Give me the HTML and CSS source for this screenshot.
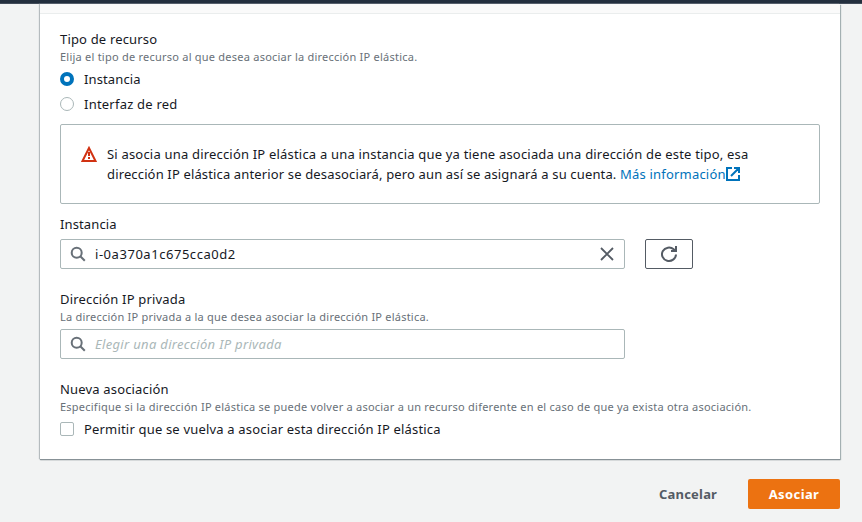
FILE: index.html
```html
<!DOCTYPE html>
<html lang="es">
<head>
<meta charset="utf-8">
<title>Asociar la dirección IP elástica</title>
<link rel="stylesheet" href="styles.css">
</head>
<body>
<div class="topbar"></div>
<main class="page">
  <section class="panel">
    <div class="panel-header"></div>
    <div class="panel-body">
      <div class="label l-type">Tipo de recurso</div>
      <div class="hint h-type">Elija el tipo de recurso al que desea asociar la dirección IP elástica.</div>
      <div class="choice first"><span class="radio selected"></span><span class="c-inst">Instancia</span></div>
      <div class="choice"><span class="radio"></span><span class="c-net">Interfaz de red</span></div>
      <div class="alert">
        <svg class="warn" viewBox="0 0 16 16"><path d="M8 2 1.5 15h13z" fill="none" stroke="#d13212" stroke-width="2"/><path d="M8 6v4M8 11v2" stroke="#d13212" stroke-width="2"/></svg>
        <p><span class="a-one">Si asocia una dirección IP elástica a una instancia que ya tiene asociada una dirección de este tipo, esa</span><br><span class="a-two">dirección IP elástica anterior se desasociará, pero aun así se asignará a su cuenta. <a>Más información</a></span><svg class="external" viewBox="0 0 14 14"><path d="M6 1H1v12h12V8M8 1h5v5M13 1 5 9" fill="none" stroke="#0073bb" stroke-width="2"/></svg></p>
      </div>
      <div class="label l-inst">Instancia</div>
      <div class="row">
        <div class="field">
          <svg class="search" viewBox="0 0 16 16"><circle cx="6.7" cy="6.7" r="5" /><path d="m10.3 10.3 4.5 4.5"/></svg>
          <span class="value">i-0a370a1c675cca0d2</span>
          <svg class="clear" viewBox="0 0 14 14"><path d="m1 1 12 12M13 1 1 13"/></svg>
        </div>
        <div class="refresh"><svg viewBox="0 0 16 16"><path d="M15 8.500a7 6.700 0 1 1-2.300-5.200L14.500 5M15 0v5h-5" fill="none" stroke="#545b64" stroke-width="2"/></svg></div>
      </div>
      <div class="label l-ip">Dirección IP privada</div>
      <div class="hint h-ip">La dirección IP privada a la que desea asociar la dirección IP elástica.</div>
      <div class="field">
        <svg class="search" viewBox="0 0 16 16"><circle cx="6.7" cy="6.7" r="5" /><path d="m10.3 10.3 4.5 4.5"/></svg>
        <span class="placeholder">Elegir una dirección IP privada</span>
      </div>
      <div class="label l-new">Nueva asociación</div>
      <div class="hint h-new">Especifique si la dirección IP elástica se puede volver a asociar a un recurso diferente en el caso de que ya exista otra asociación.</div>
      <div class="choice last"><span class="checkbox"></span><span class="c-allow">Permitir que se vuelva a asociar esta dirección IP elástica</span></div>
    </div>
  </section>
  <div class="actions"><span class="cancel">Cancelar</span><span class="submit"><span>Asociar</span></span></div>
</main>
</body>
</html>
```
FILE: styles.css
```css
* { box-sizing: border-box; }
body { margin: 0; height: 522px; overflow: hidden; background: #f2f3f3; color: #16191f; font: 13px/20px "Noto Sans", sans-serif; white-space: nowrap; }
svg { display: block; flex: none; }
.topbar { height: 4px; background: #232f3e; border-bottom: 1px solid #414b59; }
.page { padding: 0 22px 0 40px; }
.panel { width: 800px; height: 455px; background: #fff; box-shadow: 0 1px 1px #879196, 1px 1px 1px #aab7b8, -1px 0 1px #bec5c7; }
.panel-header { height: 10px; background: #fafafa; border-bottom: 1px solid #eaeded; }
.panel-body { padding: 15px 20px 0; }
.label { height: 20px; letter-spacing: .17px; }
.hint { height: 15px; font-size: 11px; line-height: 15px; letter-spacing: .233px; color: #687078; }
.choice { display: flex; align-items: center; height: 20px; gap: 10px; margin-top: 5px; letter-spacing: .18px; }
.radio { width: 14px; height: 14px; border: 1px solid #aab7b8; border-radius: 50%; background: #fff; }
.radio.selected { border: 4px solid #0073bb; }
.checkbox { width: 14px; height: 14px; border: 1px solid #aab7b8; border-radius: 2px; }
.alert { display: flex; height: 80px; margin: 10px 0; padding: 19px 20px; border: 1px solid #aab7b8; border-radius: 2px; }
.warn { width: 16px; height: 16px; margin: 2px 10px 0 0; }
.alert p { margin: 0; }
.a-one { letter-spacing: .192px; }
.a-two { letter-spacing: .143px; }
a { color: #0073bb; letter-spacing: .2px; }
.external { display: inline-block; width: 14px; height: 14px; vertical-align: -2px; }
.row { display: flex; gap: 20px; margin-bottom: 20px; }
.l-inst { height: 25px; }
.c-inst, .l-inst { letter-spacing: .12px; }
.c-net { letter-spacing: .22px; }
.field { display: flex; align-items: center; width: 565px; height: 30px; padding: 0 10px 0 9px; border: 1px solid #aab7b8; border-radius: 2px; }
.search { width: 16px; height: 16px; margin-right: 9px; fill: none; stroke: #687078; stroke-width: 2; }
.clear { width: 14px; height: 14px; margin-left: auto; fill: none; stroke: #545b64; stroke-width: 1.8; }
.value { letter-spacing: .54px; }
.placeholder { color: #aab7b8; font-style: italic; letter-spacing: .32px; }
.refresh { display: flex; align-items: center; justify-content: center; width: 48px; height: 30px; border: 1px solid #545b64; border-radius: 2px; }
.refresh svg { width: 16px; height: 16px; }
.h-ip { height: 20px; letter-spacing: .222px; }
.l-new { margin-top: 20px; }
.actions { display: flex; justify-content: flex-end; align-items: center; height: 30px; margin-top: 20px; font-weight: 700; }
.cancel { width: 89px; color: #545b64; letter-spacing: .2px; }
.submit { display: flex; align-items: center; justify-content: center; width: 92px; height: 30px; background: #ec7211; border-radius: 2px; color: #fff; letter-spacing: .4px; }
```
